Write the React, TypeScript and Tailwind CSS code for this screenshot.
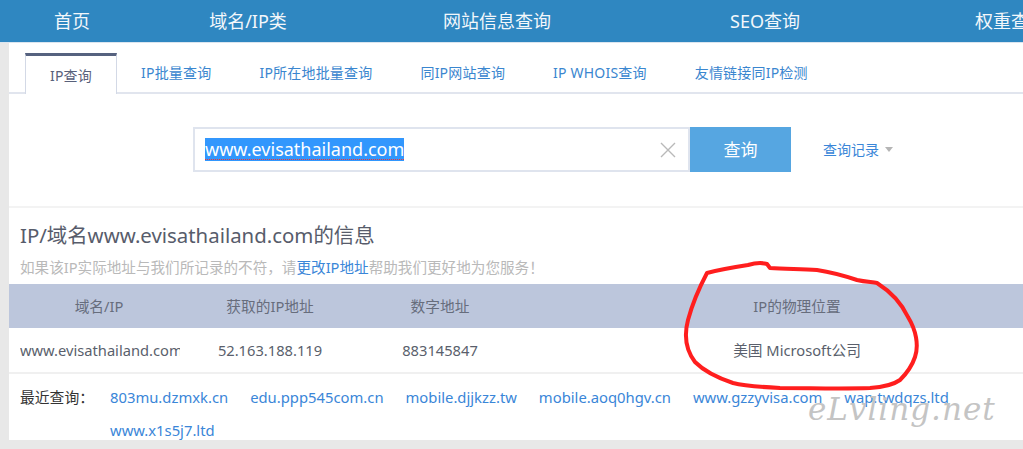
const navItems = [
  { label: "首页", w: "w-[144px]" },
  { label: "域名/IP类", w: "w-[208px]" },
  { label: "网站信息查询", w: "w-[290px]" },
  { label: "SEO查询", w: "w-[246px]" },
  { label: "权重查询", w: "w-[246px]" },
];

const tabs = ["IP查询", "IP批量查询", "IP所在地批量查询", "同IP网站查询", "IP WHOIS查询", "友情链接同IP检测"];

const recent = [
  "803mu.dzmxk.cn",
  "edu.ppp545com.cn",
  "mobile.djjkzz.tw",
  "mobile.aoq0hgv.cn",
  "www.gzzyvisa.com",
  "wap.twdqzs.ltd",
  "www.x1s5j7.ltd",
];

const font = "font-['Noto_Sans','Noto_Sans_CJK_SC',sans-serif]";

export default function App() {
  return (
    <div className={`relative w-[1023px] h-[449px] overflow-hidden bg-[#e8e8e8] ${font}`}>
      {/* top nav */}
      <nav className="flex h-[43px] bg-[#2f87c1] border-b border-[#dbe5ef] text-[18px] text-[#f3f7fb] whitespace-nowrap">
        {navItems.map((n) => (
          <div key={n.label} className={`${n.w} shrink-0 flex items-center justify-center`}>
            {n.label}
          </div>
        ))}
      </nav>

      <div className="pl-[9px]">
        <main className="w-[1056px] bg-white">
          {/* tabs */}
          <div className="flex pl-4 pt-[10px] border-b-2 border-[#e1e5ee] text-[14px] tracking-[0.2px] whitespace-nowrap">
            {tabs.map((t, i) =>
              i === 0 ? (
                <div
                  key={t}
                  className="h-[41px] -mb-[2px] px-6 flex items-center bg-white border-t-[3px] border-t-[#56627f] border-x border-x-[#d3d9e6] text-[#58607a]"
                >
                  {t}
                </div>
              ) : (
                <div key={t} className="h-[39px] px-6 flex items-center text-[#3a86cf]">
                  {t}
                </div>
              )
            )}
          </div>

          {/* search */}
          <div className="flex items-center pt-[33px] pb-[34px] pl-[184px]">
            <div className="w-[497px] h-[45px] border-2 border-[#dfe4ee] flex items-center pl-[10px] pr-[12px]">
              <span className="text-[18px] leading-[23px] bg-[#3297fd] text-white underline decoration-dotted decoration-[#e33] decoration-1 underline-offset-[3px]">
                www.evisathailand.com
              </span>
              <div className="flex-1" />
              <svg width="16" height="16" viewBox="0 0 16 16" className="text-[#b9b9b9]">
                <path d="M1 1 L15 15 M15 1 L1 15" stroke="currentColor" strokeWidth="1.4" fill="none" />
              </svg>
            </div>
            <button className="w-[101px] h-[45px] bg-[#56a6e1] text-white text-[17px]">查询</button>
            <div className="ml-[32px] flex items-center gap-[6px] text-[14px] text-[#3a86d8]">
              查询记录
              <span className="w-0 h-0 border-x-[4px] border-x-transparent border-t-[5px] border-t-[#b5b5b5]" />
            </div>
          </div>

          <div className="border-t-2 border-[#f3f3f3]" />

          {/* info */}
          <div className="pt-[13px] pl-[11px]">
            <h2 className="text-[20.4px] leading-[28px] text-[#575c6b]">IP/域名www.evisathailand.com的信息</h2>
            <p className="mt-[8px] mb-[7px] text-[14.6px] leading-[20px] text-[#b9b9b9]">
              如果该IP实际地址与我们所记录的不符，请<span className="text-[#3a86d8]">更改IP地址</span>帮助我们更好地为您服务！
            </p>
          </div>

          <div className="grid grid-cols-[180px_162px_178px_536px] text-[14.7px]">
            <div className="h-[44px] bg-[#bcc6dc] flex items-center justify-center text-[#676d7c]">域名/IP</div>
            <div className="h-[44px] bg-[#bcc6dc] flex items-center justify-center text-[#676d7c]">获取的IP地址</div>
            <div className="h-[44px] bg-[#bcc6dc] flex items-center justify-center text-[#676d7c]">数字地址</div>
            <div className="h-[44px] bg-[#bcc6dc] flex items-center justify-center text-[#676d7c]">IP的物理位置</div>

            <div className="h-[46px] flex items-center pl-[11px] pr-[9px] border-b-2 border-[#f0f0f0] text-[#5a5f6c]">
              <span className="block w-full overflow-hidden whitespace-nowrap">www.evisathailand.com</span>
            </div>
            <div className="h-[46px] flex items-center justify-center border-b-2 border-[#f0f0f0] text-[#5a5f6c]">52.163.188.119</div>
            <div className="h-[46px] flex items-center justify-center border-b-2 border-[#f0f0f0] text-[#5a5f6c]">883145847</div>
            <div className="h-[46px] flex items-center justify-center border-b-2 border-[#f0f0f0] text-[#5a5f6c]">美国 Microsoft公司</div>
          </div>

          {/* recent */}
          <div className="flex pt-[13px] pl-[11px] text-[14.8px] leading-[20px]">
            <div className="w-[90px] shrink-0 text-[#333]">最近查询：</div>
            <div className="w-[920px] flex flex-wrap gap-x-[22px] gap-y-[13px] text-[#3a86d8]">
              {recent.map((r) => (
                <span key={r}>{r}</span>
              ))}
            </div>
          </div>
        </main>
      </div>

      {/* red hand-drawn annotation */}
      <svg className="absolute left-0 top-0 pointer-events-none" width="1023" height="449">
        <path
          d="M707 273 C718 270 728 268 748 265 C755 263 760 262 767 264 L770 268 C785 269 800 269 817 270 C830 272 845 276 857 280 C866 282 872 282 877 283 C888 290 900 300 908 317 C916 330 919 345 915 357 C912 366 908 372 900 380 C893 385 885 387 870 388 C840 389 810 388 780 388 C760 387 745 386 733 383 C718 378 705 372 695 362 C686 350 684 335 688 320 C692 305 698 290 707 273"
          fill="none"
          stroke="#ff1e1e"
          strokeWidth="4"
          strokeLinecap="round"
          strokeLinejoin="round"
        />
      </svg>

      {/* watermark */}
      <div className="absolute left-[808px] top-[386px] text-[31px] italic tracking-[1px] text-[#c4c4c4] font-['DejaVu_Serif',serif] pointer-events-none">
        eLvling.net
      </div>
    </div>
  );
}
